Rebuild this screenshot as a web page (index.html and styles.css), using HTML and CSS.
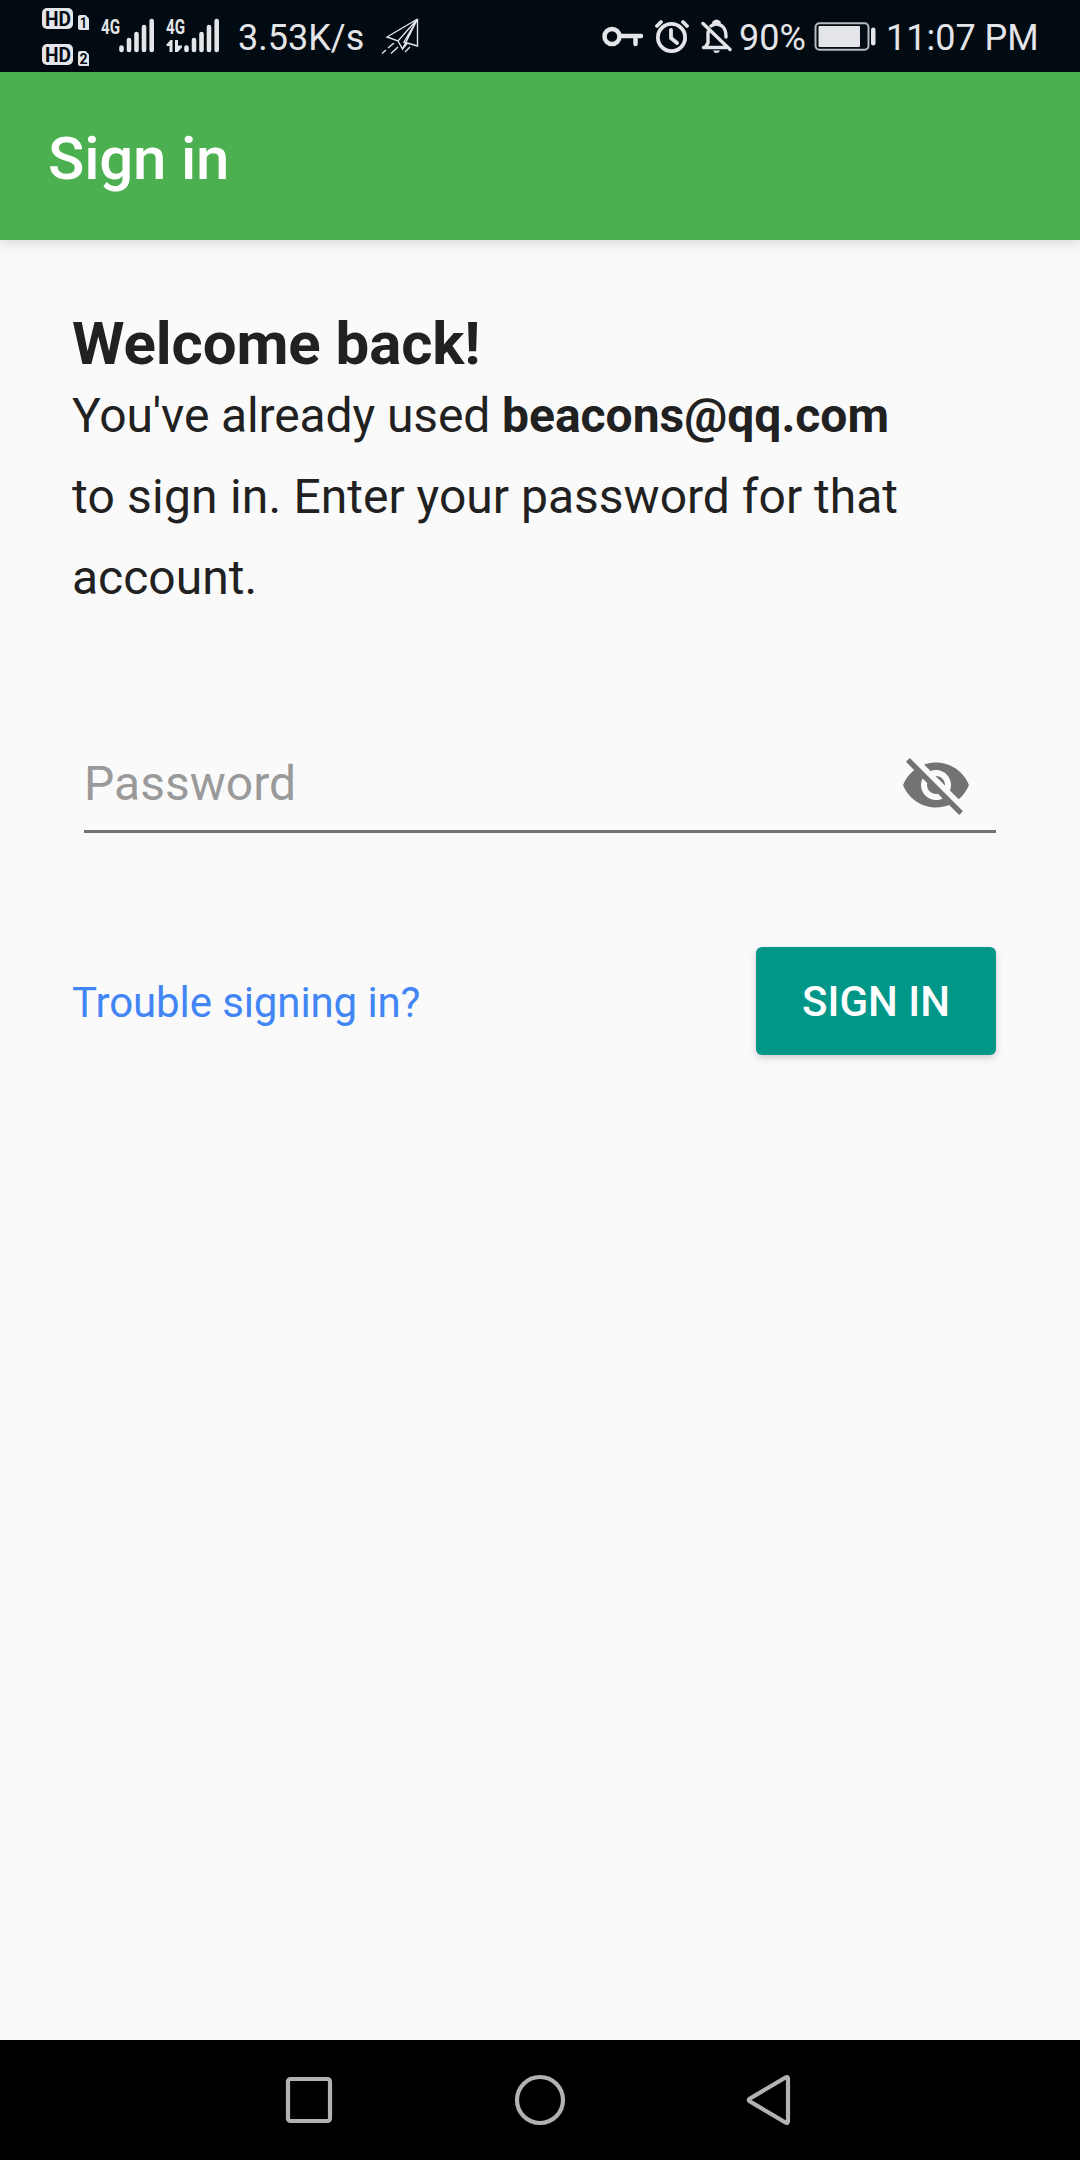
FILE: index.html
```html
<!DOCTYPE html>
<html lang="en">
<head>
<meta charset="utf-8">
<title>Sign in</title>
<link rel="stylesheet" href="styles.css">
</head>
<body>
<div class="screen">
  <header class="status">
    <svg class="status-signal" width="184" height="72" viewBox="40 0 184 72" aria-hidden="true">
      <g fill="#e4e5e8">
        <rect x="42" y="8" width="31" height="21" rx="5"/>
        <rect x="42" y="44" width="31" height="21" rx="5"/>
        <path d="M80 15H85.500L89 18.500V30H80Q78 30 78 28V17Q78 15 80 15Z"/>
        <path d="M80 51H85.500L89 54.500V66H80Q78 66 78 64V53Q78 51 80 51Z"/>
      </g>
      <g class="badge-text">
        <text x="45" y="26" font-size="21" textLength="26" lengthAdjust="spacingAndGlyphs">HD</text>
        <text x="45" y="62" font-size="21" textLength="26" lengthAdjust="spacingAndGlyphs">HD</text>
        <text x="80" y="28" font-size="15" textLength="7" lengthAdjust="spacingAndGlyphs">1</text>
        <text x="79.500" y="64" font-size="15" textLength="8" lengthAdjust="spacingAndGlyphs">2</text>
      </g>
      <g class="network-text">
        <text x="101" y="33.500" font-size="20" textLength="19" lengthAdjust="spacingAndGlyphs">4G</text>
        <text x="166" y="33.500" font-size="20" textLength="19" lengthAdjust="spacingAndGlyphs">4G</text>
      </g>
      <g fill="none" stroke="#e4e5e8" stroke-width="4.600" stroke-linecap="round">
        <path d="M121.500 47.500V50M129 40V50M136.500 34V50M144 27V50M151.700 21V50"/>
        <path d="M186.500 47.500V50M194 40V50M201.500 34V50M209 27V50M216.700 21V50"/>
      </g>
      <path d="M172.500 40V52H169.500V46H166.500V44.500L170.500 40ZM175 40H178V45.500H182V47L178 52H175Z" fill="#e4e5e8"/>
    </svg>
    <span class="status-speed">3.53K/s</span>
    <svg class="status-plane" width="40" height="40" viewBox="380 16 40 40" fill="none" stroke="#e4e5e8" stroke-width="1.400" aria-hidden="true">
      <path d="M417.500 19L387 37L398 41L417.500 19L402.500 49L398 41M417.500 19V46L404 42L417.500 19M402.500 49L407 43.500M394 43L388 48M386 50L382 53.500M398 47L391 53.500M410 47L405 52"/>
    </svg>
    <div class="status-right">
      <svg width="41" height="40" viewBox="602 16 41 40" fill="none" stroke="#e4e5e8" stroke-width="4.500" aria-hidden="true">
        <circle cx="612" cy="36.500" r="7.500"/><path d="M620 36H641M635.500 36V44" stroke-linecap="round"/>
      </svg>
      <svg class="status-alarm" width="34" height="40" viewBox="655 16 34 40" fill="none" stroke="#e4e5e8" stroke-width="3.800" stroke-linecap="round" aria-hidden="true">
        <circle cx="671.500" cy="37.500" r="13.600"/><path d="M671 30V38L677 43M657 26L661 22M687 26L683 22"/>
      </svg>
      <svg class="status-bell" width="32" height="40" viewBox="701 16 32 40" fill="none" stroke="#e4e5e8" stroke-width="3.400" aria-hidden="true">
        <path d="M703.500 47.500H726M706 46L708 43V32M711 26Q716 22 722 26Q726 29 726 37M703 23.500L730 49.500" stroke-linecap="round"/>
        <path d="M714 24V22.500Q716.500 20 719 22.500V24"/><path d="M713 50.500H720Q719 53 716.500 53T713 50.500Z" fill="#e4e5e8" stroke="none"/>
      </svg>
      <span class="status-battery-text">90%</span>
      <svg class="status-battery" width="62" height="40" viewBox="814 16 62 40" aria-hidden="true">
        <rect x="815.500" y="23.200" width="53" height="26.600" rx="4" fill="none" stroke="#b9bbbe" stroke-width="2"/>
        <rect x="818.500" y="26" width="41.500" height="21" rx="1" fill="#e4e5e8"/>
        <rect x="871" y="27.500" width="4.500" height="18" rx="2.200" fill="#e4e5e8"/>
      </svg>
      <span class="status-time">11:07 PM</span>
    </div>
  </header>
  <div class="appbar"><h1 class="appbar-title">Sign in</h1></div>
  <main class="content">
    <h2 class="welcome">Welcome back!</h2>
    <p class="message"><span class="tight">You've already used </span><b>beacons@qq.com</b><br><span class="loose">to sign in. </span>Enter your password for that<br>account.</p>
    <div class="field">
      <span class="field-hint">Password</span>
      <svg class="field-eye" width="72" height="72" viewBox="0 0 24 24" aria-hidden="true">
        <path fill="#737373" d="M12 7c2.760 0 5 2.240 5 5 0 .650-.130 1.260-.360 1.830l2.920 2.920c1.510-1.260 2.700-2.890 3.430-4.750-1.730-4.390-6-7.500-11-7.500-1.400 0-2.740.250-3.980.700l2.160 2.160C10.740 7.130 11.350 7 12 7zM2 4.270l2.280 2.280.460.460C3.080 8.300 1.780 10.020 1 12c1.730 4.390 6 7.500 11 7.500 1.550 0 3.030-.300 4.380-.840l.420.420L19.730 22 21 20.730 3.270 3 2 4.270zM7.530 9.800l1.550 1.550c-.050.210-.080.430-.080.650 0 1.660 1.340 3 3 3 .220 0 .440-.030.650-.080l1.550 1.550c-.670.330-1.410.530-2.200.530-2.760 0-5-2.240-5-5 0-.790.200-1.530.530-2.200zm4.310-.780l3.150 3.150.020-.160c0-1.660-1.340-3-3-3l-.170.010z"/>
      </svg>
    </div>
    <div class="actions">
      <a class="trouble">Trouble signing in?</a>
      <button class="signin" type="button">SIGN IN</button>
    </div>
  </main>
  <nav class="navbar">
    <svg width="52" height="52" viewBox="0 0 52 52" aria-hidden="true"><rect x="5" y="5" width="42" height="42" rx="2.500"/></svg>
    <svg width="52" height="52" viewBox="0 0 52 52" aria-hidden="true"><circle cx="26" cy="26" r="23"/></svg>
    <svg width="52" height="52" viewBox="0 0 52 52" aria-hidden="true"><path d="M40.500 3.500Q43 2 43 5V47Q43 50 40.500 48.500L5 27.500Q2.500 26 5 24.500Z"/></svg>
  </nav>
</div>
</body>
</html>
```
FILE: styles.css
```css
* { box-sizing: border-box; }
body { margin: 0; background: #fafafa; font-family: Roboto, sans-serif; color: #212121; }
.screen { display: flex; flex-direction: column; width: 1080px; height: 2160px; }

.status { display: flex; align-items: center; height: 72px; padding: 0 42px 0 40px; background: #020a12; color: #e4e5e8; font-size: 36px; line-height: 72px; white-space: nowrap; }
.status svg { flex: none; }
.status-speed { margin: 4px 0 0 14px; width: 126px; }
.status-plane { margin-left: 16px; }
.badge-text { font-family: Roboto, sans-serif; font-weight: 700; fill: #020a12; }
.network-text { font-family: Roboto, sans-serif; font-weight: 700; fill: #e4e5e8; }
.status-right { display: flex; align-items: center; margin-left: auto; }
.status-alarm { margin-left: 12px; }
.status-bell { margin-left: 12px; }
.status-battery-text { width: 75px; margin: 4px 0 0 6px; }
.status-time { width: 152px; margin: 4px 0 0 10px; }

.appbar { display: flex; align-items: center; height: 168px; padding-left: 48px; background: #4caf50; box-shadow: 0 3px 12px rgba(0, 0, 0, 0.15); }
.appbar-title { margin: 5px 0 0; color: #fff; font-size: 60px; font-weight: 500; line-height: 70px; letter-spacing: -0.2px; }

.content { flex: 1; padding: 69px 84px 0 72px; }
.welcome { margin: 0; font-size: 60px; font-weight: 700; line-height: 70px; letter-spacing: -0.1px; }
.message { margin: -4px 0 0; font-size: 48px; line-height: 81px; white-space: nowrap; }
.tight { letter-spacing: -0.12px; }
.loose { letter-spacing: 0.2px; }
.field { display: flex; align-items: center; justify-content: space-between; height: 105px; margin: 110px 0 0 12px; padding: 10px 24px 0 0; border-bottom: 3px solid #737373; }
.field-hint { margin-top: -1px; color: #9a9a9a; font-size: 48px; line-height: 56px; }
.field-eye { margin-top: 2px; }
.actions { display: flex; align-items: center; justify-content: space-between; margin-top: 114px; }
.trouble { margin-top: 3px; color: #4285f4; font-size: 42px; line-height: 50px; letter-spacing: -0.1px; }
.signin { width: 240px; height: 108px; padding: 2px 0 0; border: 0; border-radius: 6px; background: #009688; color: #fff; font: 500 42px/50px Roboto, sans-serif; box-shadow: 0 3px 7px rgba(0, 0, 0, 0.18); }

.navbar { display: flex; align-items: center; justify-content: center; gap: 179px; height: 120px; background: #000; }
.navbar svg { fill: none; stroke: #b2b2b2; stroke-width: 4.200; }
```
